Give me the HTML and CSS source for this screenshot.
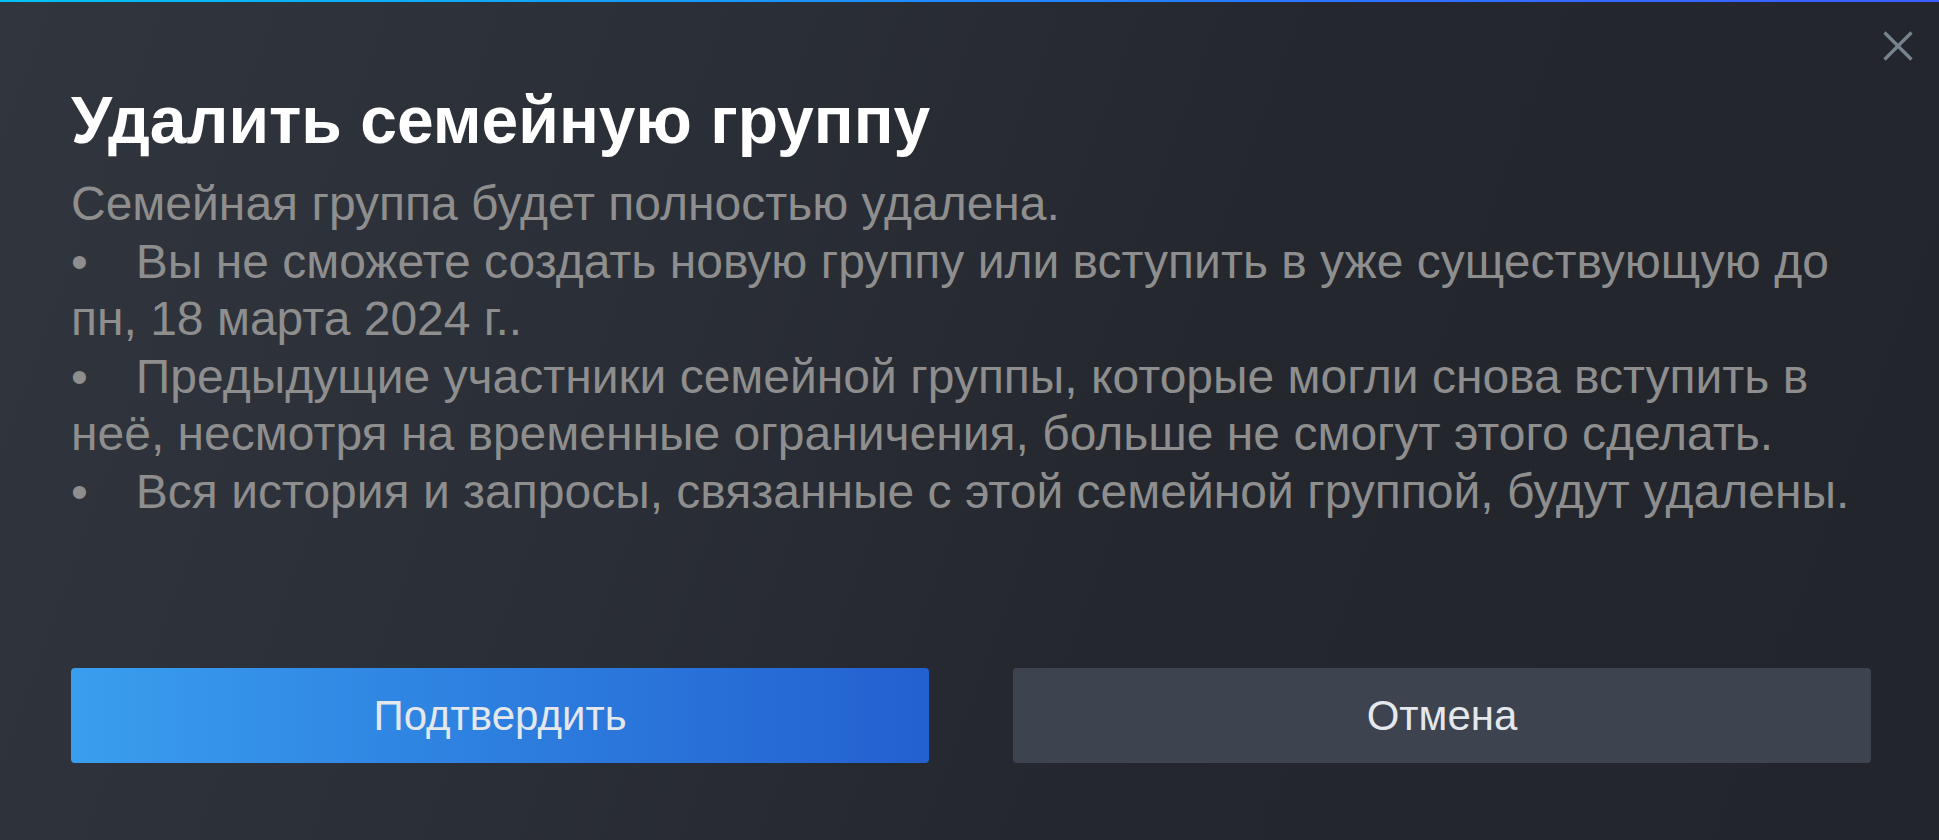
FILE: index.html
```html
<!DOCTYPE html>
<html lang="ru">
<head>
<meta charset="utf-8">
<title>Удалить семейную группу</title>
<link rel="stylesheet" href="styles.css">
</head>
<body>
<div class="dialog">
  <div class="topbar"></div>
  <button class="close" aria-label="Закрыть">
    <svg width="30" height="30" viewBox="0 0 30 30"><path d="M1.5 1.5 L28.5 28.5 M28.5 1.5 L1.5 28.5" stroke="#76848e" stroke-width="3.2" fill="none"/></svg>
  </button>
  <div class="content">
    <h1 class="title">Удалить семейную группу</h1>
    <div class="desc">
      <div class="line">Семейная группа будет полностью удалена.</div>
      <div class="item">Вы не сможете создать новую группу или вступить в уже существующую до пн, 18 марта 2024 г..</div>
      <div class="item">Предыдущие участники семейной группы, которые могли снова вступить в неё, несмотря на временные ограничения, больше не смогут этого сделать.</div>
      <div class="item">Вся история и запросы, связанные с этой семейной группой, будут удалены.</div>
    </div>
  </div>
  <div class="actions">
    <button class="btn btn-primary">Подтвердить</button>
    <button class="btn btn-secondary">Отмена</button>
  </div>
</div>
</body>
</html>
```

FILE: styles.css
```css
html, body {
  margin: 0;
  padding: 0;
  width: 100%;
  height: 100%;
  overflow: hidden;
}
body {
  font-family: "Liberation Sans", Arial, sans-serif;
  background: #262930;
}
.dialog {
  position: relative;
  box-sizing: border-box;
  width: 1939px;
  height: 840px;
  display: flex;
  flex-direction: column;
  background: linear-gradient(110deg, #31353d 0%, #2a2e36 35%, #24272e 60%, #22252c 100%);
}
.topbar {
  height: 2px;
  flex: none;
  background: linear-gradient(to right, #00c3f3, #2d73ff 70%, #3a5eff);
}
.close {
  position: absolute;
  top: 31px;
  right: 26px;
  width: 30px;
  height: 30px;
  padding: 0;
  border: 0;
  background: transparent;
  cursor: pointer;
}
.close svg { display: block; }
.content {
  flex: 1;
  padding: 78px 68px 0 71px;
}
.title {
  margin: 0;
  font-size: 66px;
  line-height: 80px;
  font-weight: 700;
  color: #ffffff;
}
.desc {
  margin-top: 15px;
  font-size: 48px;
  line-height: 57.5px;
  color: #8e8e8e;
}
.item::before {
  content: "•";
  margin-right: 48px;
}
.actions {
  display: flex;
  gap: 84px;
  padding: 0 68px 77px 71px;
}
.btn {
  flex: 1;
  height: 95px;
  border: 0;
  border-radius: 4px;
  font-family: "Liberation Sans", Arial, sans-serif;
  font-size: 42px;
  color: #e4e8ec;
  cursor: pointer;
}
.btn-primary {
  background: linear-gradient(to right, #3a9eee, #2f85e2 40%, #2360d0);
}
.btn-secondary {
  background: #3d4450;
}
```
